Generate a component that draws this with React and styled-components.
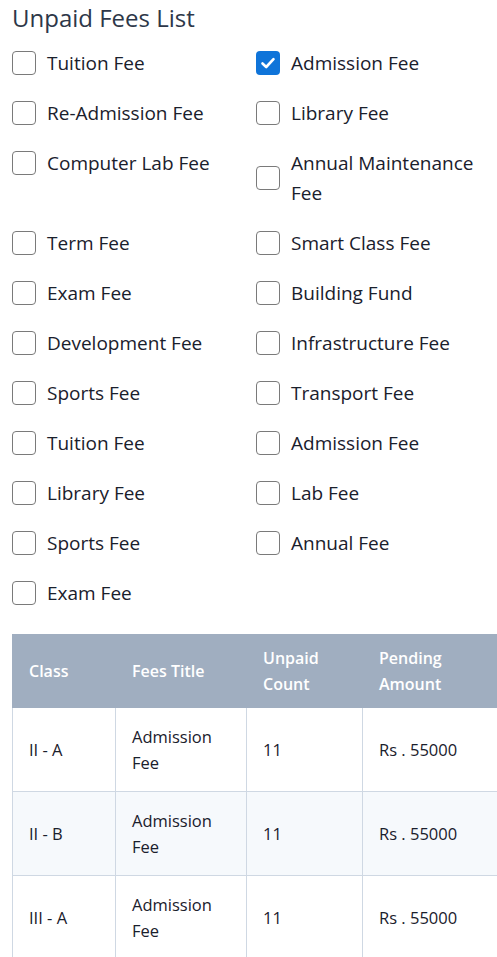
import React from 'react'
import styled, { createGlobalStyle } from 'styled-components'

const GlobalStyle = createGlobalStyle`
  body {
    margin: 0;
    background: #fff;
    font-family: "Open Sans", "Noto Sans", sans-serif;
    color: #1a202c;
  }
`

const fees = [
  ['Tuition Fee', false], ['Admission Fee', true],
  ['Re-Admission Fee', false], ['Library Fee', false],
  ['Computer Lab Fee', false], ['Annual Maintenance Fee', false],
  ['Term Fee', false], ['Smart Class Fee', false],
  ['Exam Fee', false], ['Building Fund', false],
  ['Development Fee', false], ['Infrastructure Fee', false],
  ['Sports Fee', false], ['Transport Fee', false],
  ['Tuition Fee', false], ['Admission Fee', false],
  ['Library Fee', false], ['Lab Fee', false],
  ['Sports Fee', false], ['Annual Fee', false],
  ['Exam Fee', false],
]

const rows = [
  { cls: 'II - A', title: 'Admission Fee', count: 11, amount: 55000 },
  { cls: 'II - B', title: 'Admission Fee', count: 11, amount: 55000 },
  { cls: 'III - A', title: 'Admission Fee', count: 11, amount: 55000 },
]

const App = () => {
  return (
    <Page>
      <GlobalStyle />
      <Title>Unpaid Fees List</Title>
      <FeeGrid>
        {fees.map(([label, checked], i) => (
          <FeeItem key={i}>
            <Box checked={checked}>
              {checked && (
                <svg width="16" height="16" viewBox="0 0 16 16">
                  <path d="M2.5 8.5 L6.2 12 L13.5 4.2" fill="none" stroke="#fff" strokeWidth="2.6" strokeLinecap="round" strokeLinejoin="round" />
                </svg>
              )}
            </Box>
            <Label>{label}</Label>
          </FeeItem>
        ))}
      </FeeGrid>
      <TableWrap>
        <Table>
          <colgroup>
            <col style={{ width: 103 }} />
            <col style={{ width: 131 }} />
            <col style={{ width: 116 }} />
            <col style={{ width: 150 }} />
          </colgroup>
          <thead>
            <tr>
              <Th>Class</Th>
              <Th>Fees Title</Th>
              <Th>Unpaid Count</Th>
              <Th>Pending Amount</Th>
            </tr>
          </thead>
          <tbody>
            {rows.map((r, i) => (
              <Tr key={i} striped={i % 2 === 1}>
                <Td>{r.cls}</Td>
                <Td>{r.title}</Td>
                <Td>{r.count}</Td>
                <Td>Rs . {r.amount}</Td>
              </Tr>
            ))}
          </tbody>
        </Table>
      </TableWrap>
    </Page>
  )
}

export default App

const Page = styled.div`
  padding: 0 0 0 12px;
  overflow: hidden;
`
const Title = styled.h2`
  margin: 0;
  font-size: 24px;
  font-weight: 500;
  line-height: 36px;
  color: #2d3748;
`
const FeeGrid = styled.div`
  margin-top: 12px;
  width: 473px;
  display: grid;
  grid-template-columns: 244px 229px;
  row-gap: 20px;
  align-items: start;
`
const FeeItem = styled.label`
  display: flex;
  align-items: center;
  gap: 11px;
`
const Box = styled.span`
  flex: none;
  width: 24px;
  height: 24px;
  box-sizing: border-box;
  border-radius: 4px;
  border: ${(p) => (p.checked ? 'none' : '1.5px solid #7a7a7a')};
  background: ${(p) => (p.checked ? '#0f74d9' : '#fff')};
  display: grid;
  place-items: center;
`
const Label = styled.span`
  font-size: 19px;
  line-height: 30px;
  color: #1a202c;
`
const TableWrap = styled.div`
  margin-top: 26px;
  overflow: hidden;
`
const Table = styled.table`
  border-collapse: collapse;
  table-layout: fixed;
  width: 500px;
  font-size: 16.5px;
  line-height: 26px;
`
const Th = styled.th`
  background: #a0aec0;
  color: #fff;
  font-weight: 600;
  font-size: 16px;
  text-align: left;
  padding: 10px 16px;
  height: 73px;
  box-sizing: border-box;
  border: 1px solid #a0aec0;
`
const Tr = styled.tr`
  background: ${(p) => (p.striped ? '#f6f9fc' : '#fff')};
`
const Td = styled.td`
  padding: 15.5px 16px;
  border: 1px solid #cfd8e3;
  color: #1a202c;
`
